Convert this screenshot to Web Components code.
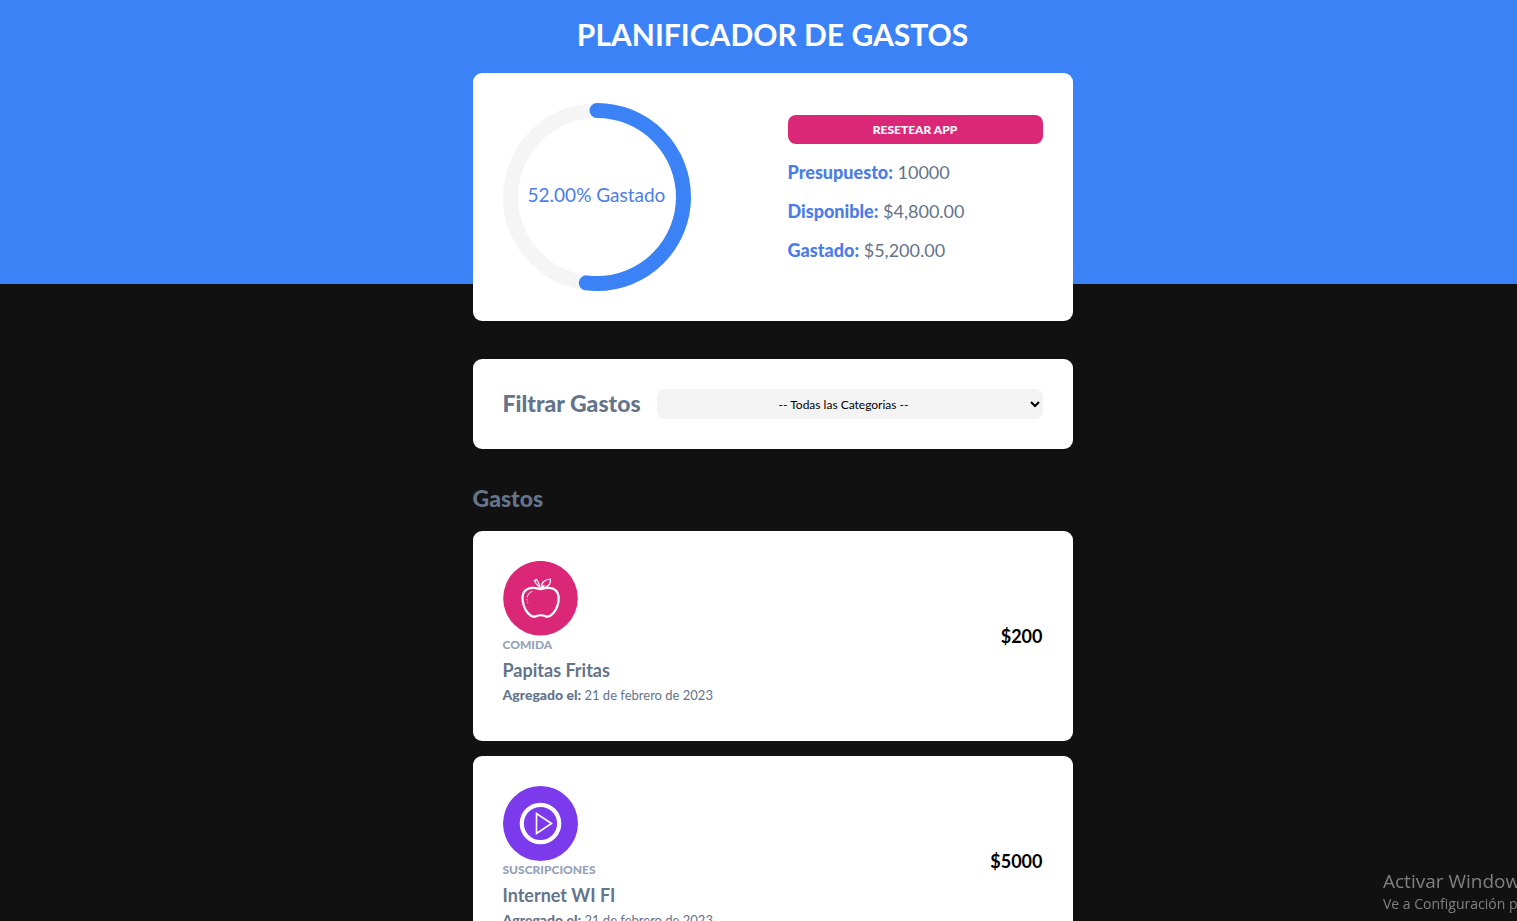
<!DOCTYPE html>
<html lang="es">
<head>
<meta charset="utf-8">
<title>Planificador de Gastos</title>
<style>
  html { background: #111; }
  body { margin: 0; font-family: Lato, sans-serif; overflow-x: hidden; }
</style>
</head>
<body>
<planner-app></planner-app>

<template id="planner-app">
  <style>
    :host { display: block; color: #64748b; }
    header { background: #3b82f6; height: 284px; }
    h1 { margin: 0; padding: 12px 0 16px 28px; font-size: 30px; line-height: 45px; font-weight: 700; color: #fff; text-align: center; text-transform: uppercase; }
    .column { width: 600px; max-width: 90%; margin: 0 auto; }
    .shift { padding-left: 28px; }
    main { padding-left: 28px; margin-top: 75px; }
    budget-control { display: block; }
    h2 { margin: 35px 0 19px; font-size: 23px; line-height: 28px; font-weight: 900; }
    .list { display: grid; gap: 15px; }
  </style>
  <header>
    <h1>Planificador de Gastos</h1>
    <div class="shift"><budget-control class="column" percent="52"></budget-control></div>
  </header>
  <main>
    <div class="column">
      <expense-filter></expense-filter>
      <h2>Gastos</h2>
      <div class="list">
        <expense-item>
          <svg slot="icon" viewBox="0 0 75 75" width="75" height="75" aria-hidden="true">
            <circle cx="37.5" cy="37.2" r="37.3" fill="#db2777"/>
            <g fill="none" stroke="#fff" stroke-linecap="round" stroke-linejoin="round">
              <path stroke-width="2.2" d="M37.5 28.2C33 27 29.5 25.8 25.5 27.6C20.5 29.8 18.8 35 19.8 40.5C20.8 46 23.8 51.8 27.6 54.5C29.5 55.9 31.5 55.8 33.5 55.1C36.3 54 39.2 54 42 55.1C44 55.8 46.3 55.8 48.2 54.2C52 51 54.7 45.5 55.5 40.5C56.3 34.5 54.3 29.5 49.7 27.6C45.5 25.8 42 27 37.5 28.2Z"/>
              <path stroke-width="1.2" d="M37.5 28C37 24 35.5 21.3 33.5 18.3L31.3 19.8C32.5 22.5 34.5 24.5 36.5 26"/>
              <path stroke-width="1.2" d="M38.5 26.5C38 21.5 42 18.5 47.3 18C48.2 23.5 44 27 38.5 26.5ZM38.5 26.5L41 24.5"/>
              <path stroke-width="1" d="M29 30.5C26.5 31.3 24.8 33.2 24.3 36M24.2 38.5V39M24.7 41.5V41.7"/>
            </g>
          </svg>
          <span slot="category">Comida</span>
          <span slot="name">Papitas Fritas</span>
          <time slot="date" datetime="2023-02-21">21 de febrero de 2023</time>
          <span slot="amount">$200</span>
        </expense-item>
        <expense-item>
          <svg slot="icon" viewBox="0 0 75 75" width="75" height="75" aria-hidden="true">
            <circle cx="37.5" cy="37.5" r="37.5" fill="#7c3aed"/>
            <circle cx="37.5" cy="37.5" r="18.7" fill="none" stroke="#fff" stroke-width="4.2"/>
            <path d="M33.5 27.5V47.5L48.5 37.5Z" fill="none" stroke="#fff" stroke-width="1.6"/>
          </svg>
          <span slot="category">Suscripciones</span>
          <span slot="name">Internet WI FI</span>
          <time slot="date" datetime="2023-02-21">21 de febrero de 2023</time>
          <span slot="amount">$5000</span>
        </expense-item>
      </div>
    </div>
  </main>
  <system-notice></system-notice>
</template>

<template id="panel-card">
  <style>
    :host { display: block; background: #fff; border-radius: 9px; padding: 30px; box-sizing: border-box; }
  </style>
  <slot></slot>
</template>

<template id="progress-ring">
  <style>
    :host { display: grid; width: 188px; height: 188px; place-items: center; color: #4a7de8; }
    svg, span { grid-area: 1 / 1; }
    span { font-size: 19px; line-height: 24px; padding-bottom: 4px; white-space: nowrap; }
    circle { fill: none; stroke-width: 15; }
    .track { stroke: #f5f5f5; }
    .bar { stroke: #3b82f6; stroke-linecap: round; }
  </style>
  <svg viewBox="0 0 188 188" width="188" height="188" aria-hidden="true">
    <circle class="track" cx="94" cy="94" r="86.5"/>
    <circle class="bar" cx="94" cy="94" r="86.5" pathLength="100" transform="rotate(-90 94 94)"/>
  </svg>
  <span><slot></slot></span>
</template>

<template id="budget-control">
  <style>
    :host { display: block; }
    .grid { display: grid; grid-template-columns: 1fr 1fr; gap: 30px; align-items: center; }
    .summary { padding-bottom: 1px; }
    button { display: block; width: 100%; height: 29px; margin: 0 0 17px; padding: 0; border: 0; border-radius: 8px; background: #db2777; color: #fff; font: 900 12px/29px Lato, sans-serif; text-transform: uppercase; cursor: pointer; }
    p { margin: 0 0 16px; font-size: 18px; line-height: 23px; color: #64748b; }
    b { font-weight: 900; color: #4a7de8; }
  </style>
  <panel-card>
    <div class="grid">
      <progress-ring></progress-ring>
      <div class="summary">
        <button type="button">Resetear App</button>
        <p><b>Presupuesto:</b> 10000</p>
        <p><b>Disponible:</b> $4,800.00</p>
        <p><b>Gastado:</b> $5,200.00</p>
      </div>
    </div>
  </panel-card>
</template>

<template id="expense-filter">
  <style>
    :host { display: block; }
    form { display: flex; align-items: center; gap: 16px; }
    label { font-size: 23px; line-height: 28px; padding-bottom: 2px; font-weight: 900; white-space: nowrap; }
    select { flex: 1; min-width: 0; height: 30px; border: 0; border-radius: 8px; background: #f3f3f3; color: #000; font: 12px Lato, sans-serif; text-align: center; text-align-last: center; }
  </style>
  <panel-card>
    <form>
      <label for="category">Filtrar Gastos</label>
      <select id="category">
        <option value="">-- Todas las Categorias --</option>
      </select>
    </form>
  </panel-card>
</template>

<template id="expense-item">
  <style>
    :host { display: block; }
    .row { display: flex; justify-content: space-between; align-items: center; }
    p { margin: 0; }
    .icon { height: 75px; }
    .category { font-size: 12px; line-height: 18px; font-weight: 900; color: #94a3b8; text-transform: uppercase; }
    .name { font-size: 18px; line-height: 32px; font-weight: 700; }
    .date { font-size: 13px; line-height: 18px; padding-bottom: 7px; }
    .date b { font-size: 14px; line-height: 1; font-weight: 900; }
    .amount { font-size: 18px; line-height: 24px; font-weight: 700; color: #000; }
  </style>
  <panel-card>
    <div class="row">
      <div>
        <div class="icon"><slot name="icon"></slot></div>
        <p class="category"><slot name="category"></slot></p>
        <p class="name"><slot name="name"></slot></p>
        <p class="date"><b>Agregado el:</b> <slot name="date"></slot></p>
      </div>
      <p class="amount"><slot name="amount"></slot></p>
    </div>
  </panel-card>
</template>

<template id="system-notice">
  <style>
    :host { display: block; position: fixed; right: 0; bottom: 7px; width: 134px; overflow: hidden; white-space: nowrap; color: #808080; font-family: "Open Sans", "Noto Sans", sans-serif; pointer-events: none; }
    p { margin: 0; }
    .title { font-size: 19px; line-height: 26px; }
    .hint { font-size: 14px; line-height: 20px; }
  </style>
  <p class="title">Activar Windows</p>
  <p class="hint">Ve a Configuración para activar Windows.</p>
</template>

<script>
  class TemplateElement extends HTMLElement {
    constructor() {
      super();
      const template = document.getElementById(this.localName);
      this.attachShadow({ mode: 'open' }).append(template.content.cloneNode(true));
    }
  }
  class PanelCard extends TemplateElement {}
  class ProgressRing extends TemplateElement {
    static observedAttributes = ['value'];
    attributeChangedCallback(name, previous, value) {
      this.shadowRoot.querySelector('.bar').setAttribute('stroke-dasharray', `${value} 100`);
    }
  }
  class BudgetControl extends TemplateElement {
    connectedCallback() {
      const percent = Number(this.getAttribute('percent'));
      const ring = this.shadowRoot.querySelector('progress-ring');
      ring.setAttribute('value', percent);
      ring.textContent = `${percent.toFixed(2)}% Gastado`;
    }
  }
  class ExpenseFilter extends TemplateElement {}
  class ExpenseItem extends TemplateElement {}
  class SystemNotice extends TemplateElement {}
  class PlannerApp extends TemplateElement {}

  customElements.define('panel-card', PanelCard);
  customElements.define('progress-ring', ProgressRing);
  customElements.define('budget-control', BudgetControl);
  customElements.define('expense-filter', ExpenseFilter);
  customElements.define('expense-item', ExpenseItem);
  customElements.define('system-notice', SystemNotice);
  customElements.define('planner-app', PlannerApp);
</script>
</body>
</html>
